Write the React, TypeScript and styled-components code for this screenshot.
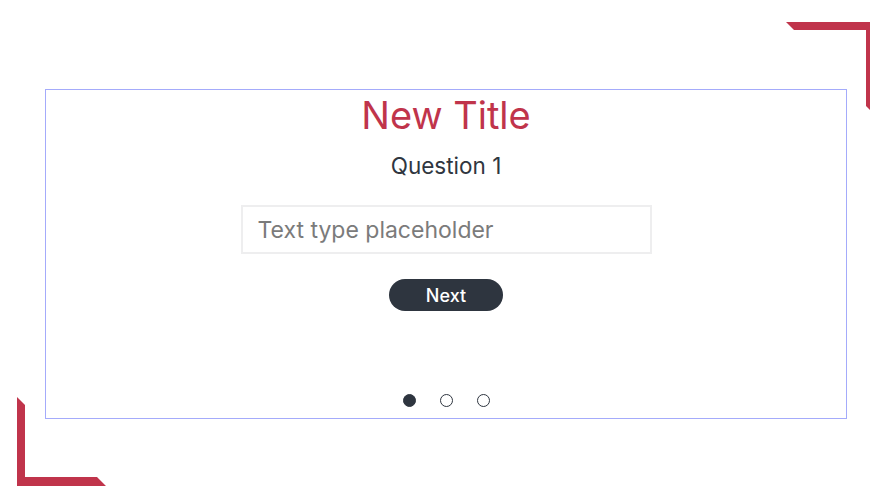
import React from 'react'
import styled, { createGlobalStyle } from 'styled-components'

const GlobalStyle = createGlobalStyle`
    html, body {
        margin: 0;
        padding: 0;
        background: #ffffff;
    }
    body {
        font-family: Inter, "Liberation Sans", sans-serif;
    }
`

const Page = styled.div`
    position: relative;
    width: 870px;
    height: 503px;
    overflow: hidden;
    padding-top: 89px;
    box-sizing: border-box;
`

const Corners = styled.svg`
    position: absolute;
    left: 0;
    top: 0;
    pointer-events: none;
`

const Card = styled.div`
    margin-left: 45px;
    width: 802px;
    height: 330px;
    box-sizing: border-box;
    border: 1px solid #a4abfb;
    display: flex;
    flex-direction: column;
    align-items: center;
    padding-top: 3px;
`

const Title = styled.h1`
    margin: 0;
    font-family: Inter, "Liberation Sans", sans-serif;
    font-weight: 400;
    font-size: 38px;
    line-height: 44px;
    color: #c0344b;
`

const Question = styled.h2`
    margin: 16px 0 0;
    font-weight: 400;
    font-size: 22.5px;
    line-height: 26px;
    color: #2f3640;
`

const Field = styled.input`
    margin-top: 26px;
    width: 411px;
    height: 49px;
    box-sizing: border-box;
    border: 2px solid #eeeeef;
    padding: 0 15px;
    font-family: Inter, "Liberation Sans", sans-serif;
    font-size: 23px;
    color: #333;
    outline: none;

    &::placeholder {
        color: #7b7b7b;
    }
`

const NextButton = styled.button`
    margin-top: 25px;
    width: 114px;
    height: 32px;
    border: none;
    border-radius: 16px;
    background: #2e353f;
    color: #ffffff;
    font-family: Inter, "Liberation Sans", sans-serif;
    font-weight: 500;
    font-size: 18px;
    cursor: pointer;
`

const Dots = styled.div`
    margin-top: auto;
    margin-bottom: 11px;
    display: flex;
    gap: 24px;
`

const Dot = styled.span<{ active?: boolean }>`
    width: 13px;
    height: 13px;
    box-sizing: border-box;
    border-radius: 50%;
    border: 1.5px solid #2e353f;
    background: ${p => (p.active ? '#2e353f' : '#ffffff')};
`

const App = () => {
    return (
        <>
            <GlobalStyle />
            <Page>
                <Corners width="870" height="503" viewBox="0 0 870 503">
                    <polygon points="786,22 876,22 876,116 866,106 866,30 794,30" fill="#c0344b" />
                    <polygon points="17,397 25,405 25,477 97,477 106,486 17,486" fill="#c0344b" />
                </Corners>
                <Card>
                    <Title>New Title</Title>
                    <Question>Question 1</Question>
                    <Field placeholder="Text type placeholder" />
                    <NextButton>Next</NextButton>
                    <Dots>
                        <Dot active />
                        <Dot />
                        <Dot />
                    </Dots>
                </Card>
            </Page>
        </>
    )
}

export default App
